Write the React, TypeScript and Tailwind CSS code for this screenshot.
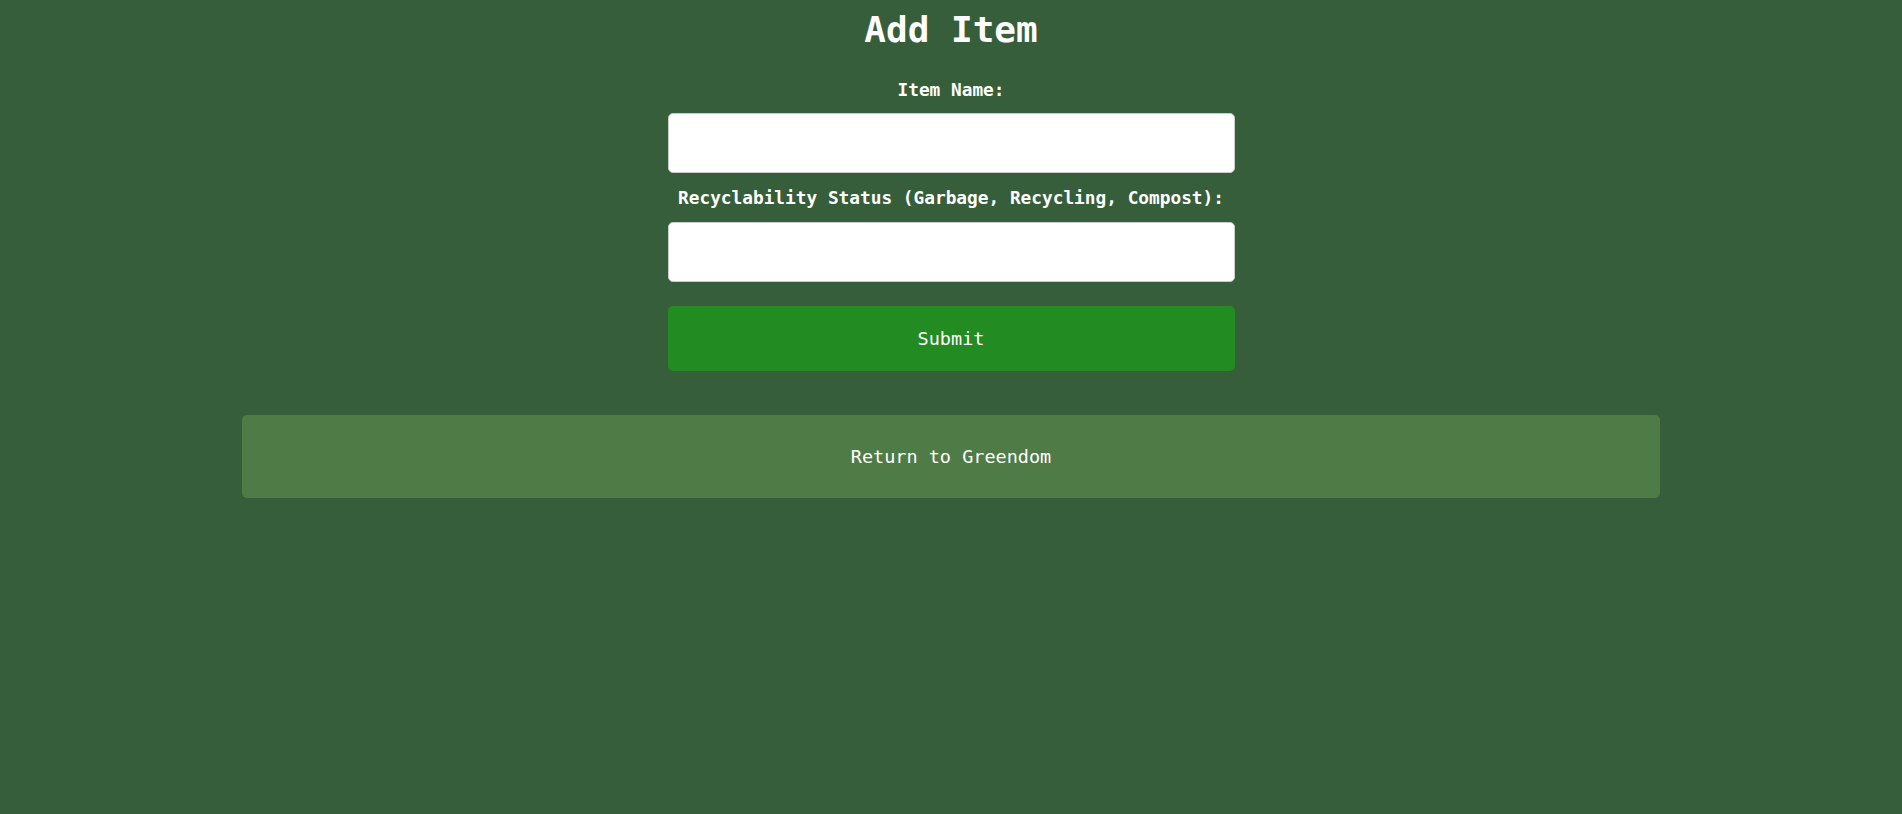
export default function App() {
  const mono = { fontFamily: '"DejaVu Sans Mono", "Liberation Mono", monospace' };
  return (
    <div className="min-h-[814px] w-full bg-[#365e3b] text-white" style={mono}>
      <div className="flex flex-col items-center">
        <h1 className="pt-[8px] text-[36px] font-bold leading-[44px]">Add Item</h1>

        <form className="flex w-[567px] flex-col items-center" onSubmit={(e) => e.preventDefault()}>
          <label htmlFor="name" className="mt-[27px] text-[17.8px] font-bold leading-[22px]">
            Item Name:
          </label>
          <input
            id="name"
            type="text"
            className="mt-[12px] h-[60px] w-full rounded-[5px] border border-[#cccccc] bg-white px-3 text-black outline-none"
          />
          <label htmlFor="status" className="mt-[14px] text-[17.8px] font-bold leading-[22px]">
            Recyclability Status (Garbage, Recycling, Compost):
          </label>
          <input
            id="status"
            type="text"
            className="mt-[13px] h-[60px] w-full rounded-[5px] border border-[#cccccc] bg-white px-3 text-black outline-none"
          />
          <button
            type="submit"
            className="mt-[24px] h-[65px] w-full rounded-[5px] bg-[#228b22] text-[18.5px] text-white"
          >
            Submit
          </button>
        </form>

        <button className="mt-[44px] h-[83px] w-[1418px] rounded-[5px] bg-[#4f7b46] text-[18.5px] text-white">
          Return to Greendom
        </button>
      </div>
    </div>
  );
}
